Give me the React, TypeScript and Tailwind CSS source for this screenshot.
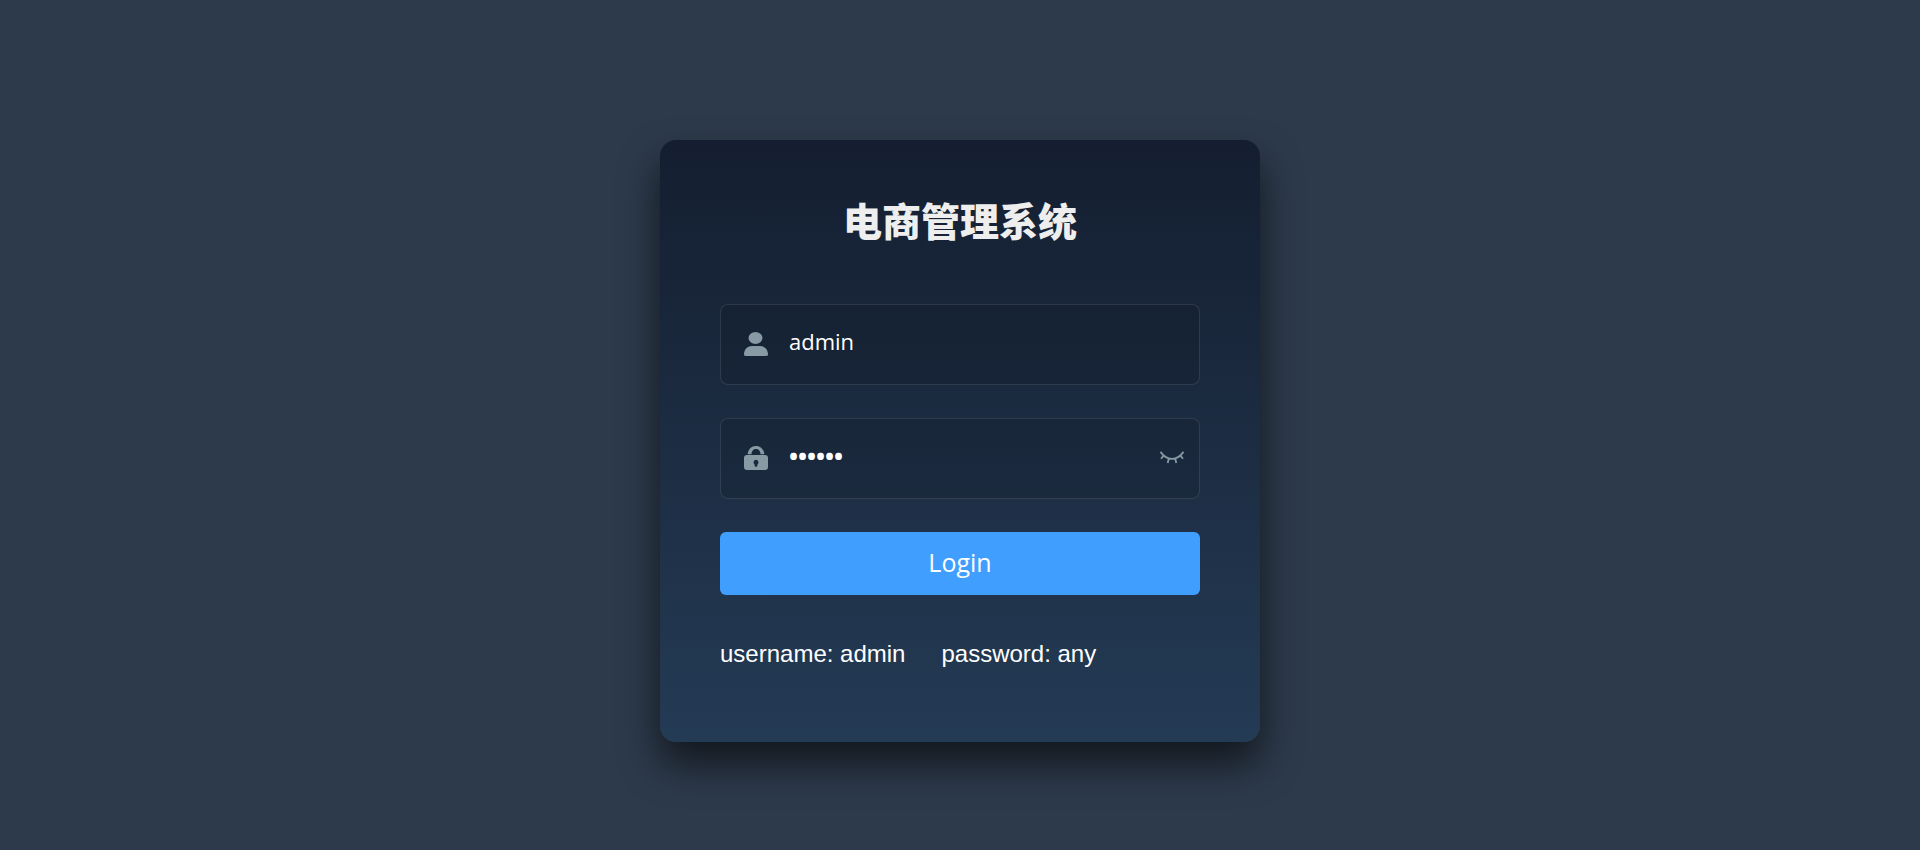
import { useState } from "react";

function UserIcon() {
  return (
    <svg viewBox="0 0 24 24" className="size-6 shrink-0" fill="currentColor" aria-hidden="true">
      <ellipse cx="11.5" cy="6" rx="7" ry="6" />
      <path d="M8 14h8c5 0 8 4 8 8.500Q24 24 22 24H2Q0 24 0 22.500C0 18 3 14 8 14z" />
    </svg>
  );
}

function LockIcon() {
  return (
    <svg viewBox="0 0 24 24" className="size-6 shrink-0" fill="currentColor" aria-hidden="true">
      <path d="M3.700 8.200C4 3.500 7.500 0 12 0s8 3.500 8.300 8.200h-3.800C16.500 5 14.500 3 12 3S7.500 5 7.500 8.200z" />
      <path
        fillRule="evenodd"
        d="M3 9h18a3 3 0 0 1 3 3v9a3 3 0 0 1-3 3H3a3 3 0 0 1-3-3v-9a3 3 0 0 1 3-3zm9 4.800a2.600 2.600 0 0 0-1.400 4.700v.9a1.400 1.400 0 0 0 2.800 0v-.9A2.600 2.600 0 0 0 12 13.800z"
      />
    </svg>
  );
}

function ClosedEyeIcon() {
  return (
    <svg
      viewBox="0 0 24 13"
      className="h-[13px] w-6"
      fill="none"
      stroke="currentColor"
      strokeWidth="1.800"
      aria-hidden="true"
    >
      <path d="M.5 .8C3 4.500 7 7.800 12 7.800S21 4.500 23.500 .8M3.900 4.300L1 7.800M20.100 4.300L23 7.800M8.800 7.500L7.700 12M15.200 7.500L16.300 12" />
    </svg>
  );
}

const fieldClass =
  "flex h-[81px] items-center gap-[21px] rounded-lg border border-white/10 bg-black/10 pr-[15px] pb-[2px] pl-[23px] text-[#889aa4]";
const inputClass = "mb-1 h-[30px] min-w-0 flex-1 bg-transparent text-white outline-none";

export default function App() {
  const [visible, setVisible] = useState(false);

  return (
    <main className="flex min-h-screen items-start justify-center bg-[#2d3a4b] px-4 pt-[140px] pb-[100px] font-['Open_Sans','Noto_Sans_CJK_SC',sans-serif]">
      <form
        onSubmit={(event) => event.preventDefault()}
        className="w-full max-w-[600px] rounded-2xl bg-linear-to-b from-[#141e30] to-[#243b55] px-[60px] pt-[60px] pb-[74px] shadow-[0_22px_38px_rgba(0,0,0,0.6)]"
      >
        <h1 className="mb-[62px] text-center text-[39px] leading-[42px] font-black text-[#eeeeee]">
          电商管理系统
        </h1>
        <div className="flex flex-col gap-[33px]">
          <div className={fieldClass}>
            <label htmlFor="username" aria-label="Username">
              <UserIcon />
            </label>
            <input
              id="username"
              type="text"
              defaultValue="admin"
              className={`${inputClass} text-[22px]`}
            />
          </div>
          <div className={fieldClass}>
            <label htmlFor="password" aria-label="Password">
              <LockIcon />
            </label>
            <input
              id="password"
              type={visible ? "text" : "password"}
              defaultValue="111111"
              className={`${inputClass} text-2xl font-bold`}
            />
            <button type="button" aria-label="Toggle password" onClick={() => setVisible(!visible)}>
              <ClosedEyeIcon />
            </button>
          </div>
          <button
            type="submit"
            className="h-[63px] rounded-md bg-[#409eff] pb-[2px] text-[25px] text-white"
          >
            Login
          </button>
        </div>
        <p className="mt-[45px] flex gap-9 font-['Liberation_Sans',sans-serif] text-2xl leading-7 text-white">
          <span>username: admin</span>
          <span>password: any</span>
        </p>
      </form>
    </main>
  );
}
